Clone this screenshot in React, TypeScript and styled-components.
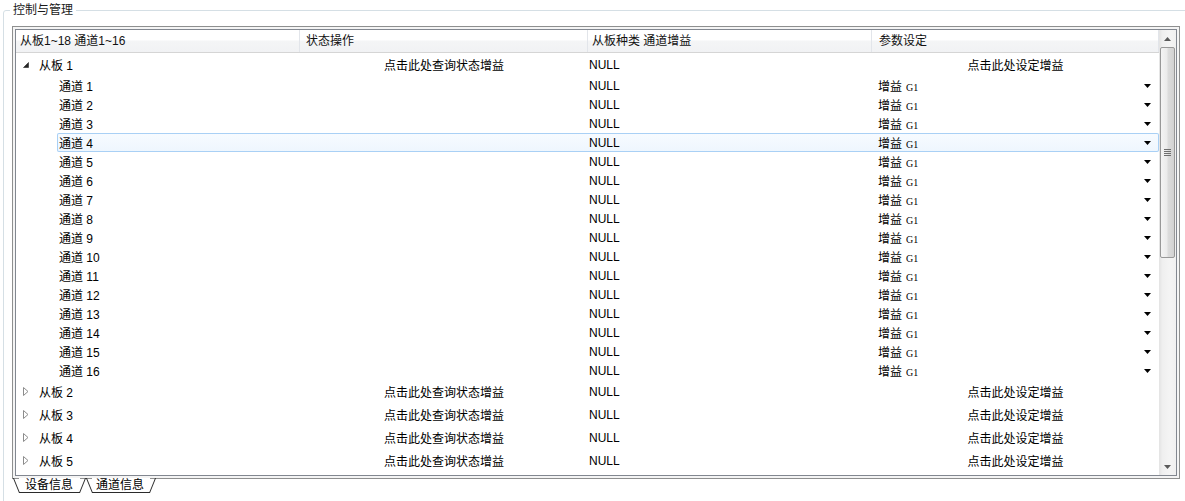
import React from 'react';
import styled, { createGlobalStyle, css } from 'styled-components';

const FONT = `"Liberation Sans", "Noto Sans CJK SC", sans-serif`;

const GlobalStyle = createGlobalStyle`
  html, body { margin: 0; padding: 0; background: #fff; overflow: hidden; }
  body { font-family: ${FONT}; font-size: 12px; color: #000; }
`;

const Page = styled.div`
  width: 1185px;
  height: 501px;
  overflow: hidden;
`;

const GroupBox = styled.section`
  margin: 10px 0 0 3px;
  width: 1200px;
  height: 520px;
  box-sizing: border-box;
  border: 1px solid #d5dfe5;
  border-radius: 3px;
  padding: 0 0 0 8px;
`;

const GroupTitle = styled.div`
  width: fit-content;
  margin: -9px 0 0 -2px;
  padding: 0 3px;
  background: #fff;
  line-height: 16px;
  font-size: 12px;
  color: #1a1a1a;
`;

const Frame = styled.div`
  margin-top: 8px;
  width: 1168px;
  height: 453px;
  box-sizing: border-box;
  border: 1px solid #8e8f8f;
  padding: 2px;
  background: #f4f4f4;
  display: flex;
`;

const Inner = styled.div`
  flex: 1;
  border: 1px solid #828790;
  background: #fff;
  display: flex;
  overflow: hidden;
`;

const TreeArea = styled.div`
  width: 1143px;
  display: flex;
  flex-direction: column;
`;

const COLS = `284px 288px 284px 287px`;

const Header = styled.div`
  display: grid;
  grid-template-columns: ${COLS};
  height: 23px;
  box-sizing: border-box;
  border-bottom: 1px solid #d5d5d5;
  background: linear-gradient(to bottom, #ffffff 0%, #ffffff 45%, #f4f5f6 50%, #f1f2f4 100%);
`;

const HeaderCell = styled.div<{ $pad: number }>`
  padding-left: ${p => p.$pad}px;
  line-height: 22px;
  border-right: 1px solid #e2e5ea;
  white-space: nowrap;
  color: #111;
`;

const Row = styled.div<{ $h: number }>`
  display: flex;
  height: ${p => p.$h}px;
`;

const Indent = styled.div<{ $w: number }>`
  width: ${p => p.$w}px;
  flex: none;
  display: flex;
  align-items: center;
  padding-left: 7px;
  box-sizing: border-box;
`;

const RowBody = styled.div<{ $sel?: boolean }>`
  flex: 1;
  display: grid;
  grid-template-columns: 1fr 288px 284px 287px;
  align-items: center;
  border-radius: 2px;
  ${p =>
    p.$sel &&
    css`
      box-shadow: inset 0 0 0 1px #a9d0f5;
      background: linear-gradient(to bottom, #f7fbff, #eef6fe);
    `}
`;

const NameCell = styled.div`
  padding-left: 2px;
  white-space: nowrap;
`;

const CenterCell = styled.div`
  text-align: center;
  white-space: nowrap;
`;

const NullCell = styled.div`
  padding-left: 1px;
`;

const ComboCell = styled.div`
  display: flex;
  align-items: center;
  justify-content: space-between;
  padding: 0 8px 0 6px;
`;

const ComboText = styled.span`
  white-space: nowrap;
`;

const GainTag = styled.span`
  font-family: "Liberation Serif", serif;
  font-size: 10px;
  margin-left: 4px;
`;

const Scrollbar = styled.div`
  width: 17px;
  display: flex;
  flex-direction: column;
  background: linear-gradient(to right, #e3e3e3 0%, #efefef 20%, #f4f4f4 60%, #f0f0f0 100%);
`;

const ScrollButton = styled.div`
  height: 17px;
  flex: none;
  display: flex;
  align-items: center;
  justify-content: center;
`;

const ScrollTrack = styled.div`
  flex: 1;
  display: flex;
  flex-direction: column;
`;

const Thumb = styled.div`
  margin: 0 1px;
  height: 211px;
  box-sizing: border-box;
  border: 1px solid #989898;
  border-radius: 2px;
  background: linear-gradient(to right, #f4f4f4 0%, #ebebeb 45%, #dcdcdc 55%, #d2d2d2 100%);
  display: flex;
  align-items: center;
  justify-content: center;
`;

const Grip = styled.div`
  width: 7px;
  height: 7px;
  background: repeating-linear-gradient(to bottom, #6f6f6f 0 1px, transparent 1px 2px);
`;

const TabBar = styled.div`
  display: flex;
  margin: -1px 0 0 7px;
`;

const Tab = styled.div<{ $active?: boolean; $pl: number; $pr: number; $ml: number }>`
  position: relative;
  height: 14px;
  line-height: 14px;
  padding: 0 ${p => p.$pr}px 0 ${p => p.$pl}px;
  margin-left: ${p => p.$ml}px;
  border-bottom: 1px solid #2b2b2b;
  background: #fff;
  font-size: 12px;
  z-index: ${p => (p.$active ? 2 : 1)};
  &::before,
  &::after {
    content: '';
    position: absolute;
    bottom: -1px;
    width: 1px;
    height: 15px;
    background: #2b2b2b;
    transform-origin: bottom;
  }
  &::before {
    left: 0;
    transform: skewX(22deg);
  }
  &::after {
    right: 0;
    transform: skewX(-22deg);
  }
`;

const ExpandedIcon = () => (
  <svg width="6" height="6" viewBox="0 0 6 6">
    <polygon points="5.5,0.5 5.5,5.5 0.5,5.5" fill="#262626" stroke="#262626" strokeWidth="0.6" />
  </svg>
);

const CollapsedIcon = () => (
  <svg width="6" height="9" viewBox="0 0 6 9">
    <polygon points="0.5,0.5 5,4.5 0.5,8.5" fill="#fff" stroke="#8c8c8c" strokeWidth="1" />
  </svg>
);

const DropArrow = () => (
  <svg width="7" height="4" viewBox="0 0 7 4">
    <polygon points="0,0 7,0 3.5,4" fill="#000" />
  </svg>
);

const ScrollArrow = ({ up }: { up?: boolean }) => (
  <svg width="7" height="4" viewBox="0 0 7 4">
    <polygon points={up ? '0,4 7,4 3.5,0' : '0,0 7,0 3.5,4'} fill="#5a5a5a" />
  </svg>
);

const BoardRow = ({ n, open }: { n: number; open?: boolean }) => (
  <Row $h={23}>
    <Indent $w={21}>{open ? <ExpandedIcon /> : <CollapsedIcon />}</Indent>
    <RowBody>
      <NameCell>从板 {n}</NameCell>
      <CenterCell>点击此处查询状态增益</CenterCell>
      <NullCell>NULL</NullCell>
      <CenterCell>点击此处设定增益</CenterCell>
    </RowBody>
  </Row>
);

const ChannelRow = ({ n, selected }: { n: number; selected?: boolean }) => (
  <Row $h={19}>
    <Indent $w={41} />
    <RowBody $sel={selected}>
      <NameCell>通道 {n}</NameCell>
      <div />
      <NullCell>NULL</NullCell>
      <ComboCell>
        <ComboText>
          增益<GainTag>G1</GainTag>
        </ComboText>
        <DropArrow />
      </ComboCell>
    </RowBody>
  </Row>
);

export default function App() {
  const channels = Array.from({ length: 16 }, (_, i) => i + 1);
  return (
    <Page>
      <GlobalStyle />
      <GroupBox>
        <GroupTitle>控制与管理</GroupTitle>
        <Frame>
          <Inner>
            <TreeArea>
              <Header>
                <HeaderCell $pad={4}>从板1~18 通道1~16</HeaderCell>
                <HeaderCell $pad={6}>状态操作</HeaderCell>
                <HeaderCell $pad={4}>从板种类 通道增益</HeaderCell>
                <HeaderCell $pad={7}>参数设定</HeaderCell>
              </Header>
              <BoardRow n={1} open />
              {channels.map(c => (
                <ChannelRow key={c} n={c} selected={c === 4} />
              ))}
              {[2, 3, 4, 5].map(b => (
                <BoardRow key={b} n={b} />
              ))}
            </TreeArea>
            <Scrollbar>
              <ScrollButton>
                <ScrollArrow up />
              </ScrollButton>
              <ScrollTrack>
                <Thumb>
                  <Grip />
                </Thumb>
              </ScrollTrack>
              <ScrollButton>
                <ScrollArrow />
              </ScrollButton>
            </Scrollbar>
          </Inner>
        </Frame>
        <TabBar>
          <Tab $pl={6} $pr={7} $ml={0}>设备信息</Tab>
          <Tab $active $pl={4} $pr={6} $ml={12}>通道信息</Tab>
        </TabBar>
      </GroupBox>
    </Page>
  );
}
